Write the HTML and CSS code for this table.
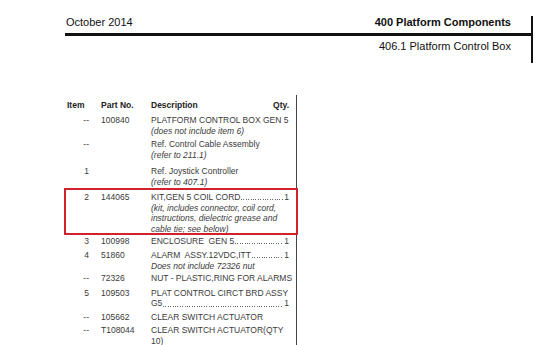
FILE: index.html
```html
<!DOCTYPE html>
<html lang="en">
<head>
  <meta charset="UTF-8">
  <title>406.1 Platform Control Box</title>
  <link rel="stylesheet" href="styles.css">
</head>
<body>
  <header class="doc-head">
    <div class="head-top">
      <span>October 2014</span>
      <span class="section">400 Platform Components</span>
    </div>
    <div class="head-sub">406.1 Platform Control Box</div>
  </header>

  <div class="parts">
    <div class="row head">
      <span class="item">Item</span>
      <span class="part">Part No.</span>
      <span class="desc lead"><span>Description</span><span class="gap"></span><span>Qty.</span></span>
    </div>

    <div class="row r1">
      <span class="item">--</span>
      <span class="part">100840</span>
      <span class="desc"><span class="line">PLATFORM CONTROL BOX GEN 5</span><em>(does not include item 6)</em></span>
    </div>

    <div class="row r2">
      <span class="item">--</span>
      <span class="part"></span>
      <span class="desc"><span class="line">Ref. Control Cable Assembly</span><em>(refer to 211.1)</em></span>
    </div>

    <div class="row r3">
      <span class="item">1</span>
      <span class="part"></span>
      <span class="desc"><span class="line">Ref. Joystick Controller</span><em>(refer to 407.1)</em></span>
    </div>

    <div class="row marked">
      <span class="item">2</span>
      <span class="part">144065</span>
      <span class="desc">
        <span class="lead"><span>KIT,GEN 5 COIL CORD</span><span class="dots"></span><span>1</span></span>
        <em>(kit, includes connector, coil cord, instructions, dielectric grease and cable tie; see below)</em>
      </span>
    </div>

    <div class="row r5">
      <span class="item">3</span>
      <span class="part">100998</span>
      <span class="desc lead"><span>ENCLOSURE&nbsp; GEN 5</span><span class="dots"></span><span>1</span></span>
    </div>

    <div class="row r6">
      <span class="item">4</span>
      <span class="part">51860</span>
      <span class="desc">
        <span class="lead"><span>ALARM&nbsp; ASSY.12VDC,ITT</span><span class="dots"></span><span>1</span></span>
        <em>Does not include 72326 nut</em>
      </span>
    </div>

    <div class="row r7">
      <span class="item">--</span>
      <span class="part">72326</span>
      <span class="desc"><span class="line">NUT - PLASTIC,RING FOR ALARMS</span></span>
    </div>

    <div class="row r8">
      <span class="item">5</span>
      <span class="part">109503</span>
      <span class="desc">
        <span class="line">PLAT CONTROL CIRCT BRD ASSY</span>
        <span class="lead"><span>G5</span><span class="dots"></span><span>1</span></span>
      </span>
    </div>

    <div class="row r9">
      <span class="item">--</span>
      <span class="part">105662</span>
      <span class="desc"><span class="line">CLEAR SWITCH ACTUATOR</span></span>
    </div>

    <div class="row r10">
      <span class="item">--</span>
      <span class="part">T108044</span>
      <span class="desc"><span class="line">CLEAR SWITCH ACTUATOR(QTY</span><span class="line">10)</span></span>
    </div>
  </div>
</body>
</html>
```

FILE: styles.css
```css
body {
  margin: 0;
  background: #fff;
  font-family: "Liberation Sans", Arial, sans-serif;
  color: #111;
}
.doc-head {
  margin: 16px 0 0 65px;
  width: 466px;
  height: 47px;
  border-right: 2px solid #111;
  font-size: 11px;
  line-height: 13px;
}
.head-top {
  display: flex;
  justify-content: space-between;
  padding: 0 20px 4px 1px;
  border-bottom: 3px solid #111;
}
.section {
  font-weight: bold;
}
.head-sub {
  margin-top: 4px;
  padding-right: 20px;
  text-align: right;
}
.parts {
  margin: 32px 0 0 66px;
  width: 231px;
  height: 250px;
  padding-top: 4.6px;
  box-sizing: border-box;
  border-right: 1px solid #444;
  font-size: 8.5px;
  line-height: 10.8px;
  color: #3a3a3a;
}
.row {
  display: grid;
  grid-template-columns: 35px 50px 138px;
  margin-top: 2.5px;
}
.item {
  padding-right: 12px;
  text-align: right;
}
.desc {
  display: block;
  white-space: nowrap;
}
.desc em {
  display: block;
  white-space: normal;
}
.line {
  display: block;
}
.lead {
  display: flex;
}
.gap {
  flex: 1;
}
.dots {
  flex: 1;
  margin: 0 1px 2.5px;
  background: repeating-linear-gradient(to right, #666 0 1px, transparent 1px 2.4px) left bottom / 100% 1px no-repeat;
}
.head {
  margin-top: 0;
  font-weight: bold;
  color: #222;
}
.head .item {
  text-align: left;
  padding-left: 1px;
}
.r1 {
  margin-top: 5px;
}
.r2 {
  margin-top: 2px;
}
.r3 {
  margin-top: 5.8px;
}
.marked {
  margin-top: 1.8px;
  height: 43px;
  padding-top: 2.6px;
  box-sizing: border-box;
  line-height: 10.4px;
  outline: 2px solid #d3212b;
}
.r5 {
  margin-top: 3px;
}
.r6 {
  margin-top: 3.2px;
}
.r7 {
  margin-top: 1.4px;
}
.r8 {
  margin-top: 4px;
}
.r9 {
  margin-top: 2.6px;
}
.r10 {
  margin-top: 2.2px;
}
```
